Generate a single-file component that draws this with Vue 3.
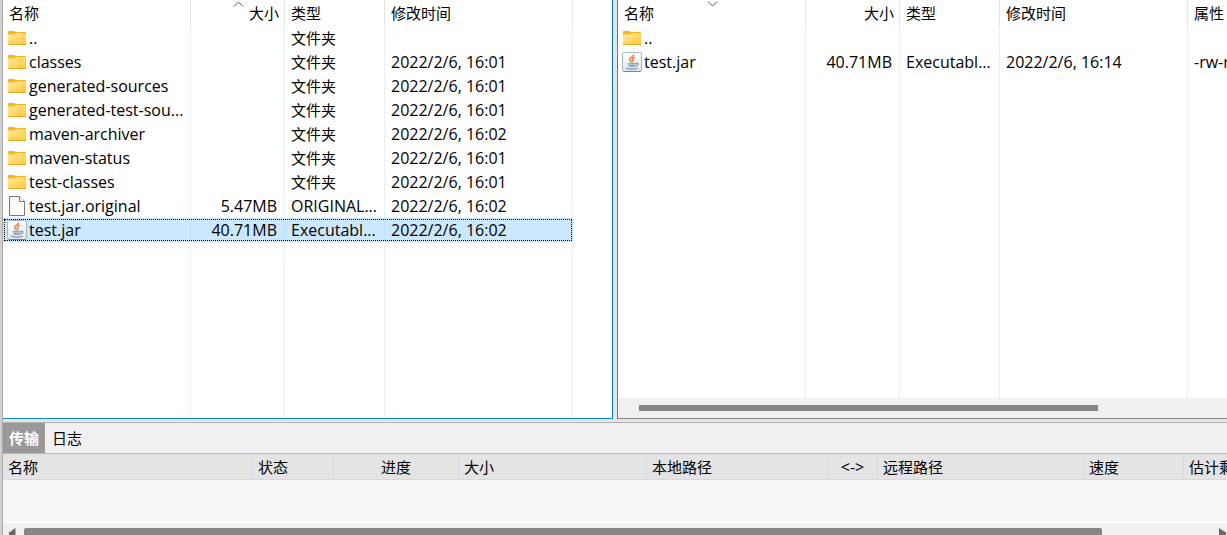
<script setup>
const folder = (name, time = '') => ({ icon: 'folder', name, size: '', type: '文件夹', time })

const localFiles = [
  folder('..'),
  folder('classes', '2022/2/6, 16:01'),
  folder('generated-sources', '2022/2/6, 16:01'),
  folder('generated-test-sou...', '2022/2/6, 16:01'),
  folder('maven-archiver', '2022/2/6, 16:02'),
  folder('maven-status', '2022/2/6, 16:01'),
  folder('test-classes', '2022/2/6, 16:01'),
  { icon: 'file', name: 'test.jar.original', size: '5.47MB', type: 'ORIGINAL...', time: '2022/2/6, 16:02' },
  { icon: 'jar', name: 'test.jar', size: '40.71MB', type: 'Executabl...', time: '2022/2/6, 16:02', selected: true },
]

const remoteFiles = [
  { icon: 'folder', name: '..', size: '', type: '', time: '', attr: '' },
  { icon: 'jar', name: 'test.jar', size: '40.71MB', type: 'Executabl...', time: '2022/2/6, 16:14', attr: '-rw-r--r--' },
]

const panes = [
  { id: 'local', files: localFiles, sort: 'size' },
  { id: 'remote', files: remoteFiles, sort: 'name' },
]

const transferColumns = [
  { key: 'name', label: '名称' },
  { key: 'state', label: '状态' },
  { key: 'progress', label: '进度' },
  { key: 'bytes', label: '大小' },
  { key: 'local-path', label: '本地路径' },
  { key: 'direction', label: '<->' },
  { key: 'remote-path', label: '远程路径' },
  { key: 'speed', label: '速度' },
  { key: 'remaining', label: '估计剩余' },
]
</script>

<template>
  <div class="window">
    <svg class="defs" width="0" height="0" aria-hidden="true">
      <defs>
        <linearGradient id="folder-fill" x1="0" y1="0" x2="1" y2="1">
          <stop offset="0" stop-color="#ffe9a2" />
          <stop offset="1" stop-color="#ffc937" />
        </linearGradient>
        <linearGradient id="jar-fill" x1="0" y1="0" x2="0" y2="1">
          <stop offset="0" stop-color="#ffffff" />
          <stop offset="1" stop-color="#dfe5ea" />
        </linearGradient>
      </defs>
    </svg>

    <main class="panes">
      <section v-for="pane in panes" :key="pane.id" class="pane" :class="pane.id">
        <div class="listing">
          <table class="files">
            <colgroup>
              <col class="c-name" /><col class="c-size" /><col class="c-type" /><col class="c-time" />
              <col v-if="pane.id === 'remote'" class="c-attr" />
            </colgroup>
            <thead>
              <tr>
                <th>
                  名称
                  <svg v-if="pane.sort === 'name'" class="sort" viewBox="0 0 11 6"><path d="M1 .5 5.500 5 10 .5" /></svg>
                </th>
                <th class="size">
                  大小
                  <svg v-if="pane.sort === 'size'" class="sort" viewBox="0 0 11 6"><path d="M1 5.500 5.500 1 10 5.500" /></svg>
                </th>
                <th>类型</th>
                <th>修改时间</th>
                <th v-if="pane.id === 'remote'">属性</th>
              </tr>
            </thead>
            <tbody>
              <tr v-for="file in pane.files" :key="file.name" :class="{ selected: file.selected }">
                <td class="name">
                  <div class="entry">
                    <svg v-if="file.icon === 'folder'" class="icon" viewBox="0 0 20 20">
                      <path d="M1 3.500Q1 3 1.500 3H7.500L8.500 4H18.500Q19 4 19 4.500V6H1Z" fill="#f8b61c" />
                      <path d="M1 7H7.500L9 5H19V16H1Z" fill="url(#folder-fill)" />
                      <path d="M1 16H19V17H1Z" fill="#e9a821" />
                      <path d="M1 5H8.500L7.500 6.800H1Z" fill="#fbb915" />
                    </svg>
                    <svg v-else-if="file.icon === 'file'" class="icon" viewBox="0 0 20 20">
                      <path d="M2.500 .5H12.500L17.500 5.500V19.500H2.500Z" fill="#fafafa" stroke="#777" />
                      <path d="M12.500 .5V5.500H17.500" fill="#fff" stroke="#777" />
                    </svg>
                    <svg v-else class="icon" viewBox="0 0 20 20">
                      <rect x=".5" y=".5" width="19" height="19" rx="2" fill="url(#jar-fill)" stroke="#a3b6c4" />
                      <path d="M1.500 19.500H18.500" stroke="#6f8494" />
                      <path d="M11.500 2.500C12.500 4.500 7.200 5.300 7.700 7.700 8 9 9.300 9.300 9.500 10.300M13 5.200C10.500 6 10 7 10.700 8 11.300 9 10.800 9.700 10.200 10.300" fill="none" stroke="#ee8645" stroke-width="1.600" />
                      <path d="M5.500 10.900H13.800L12.800 15H7Z" fill="#8fa7ba" />
                      <path d="M6.500 12.700H13" stroke="#c7d3dc" stroke-width=".8" />
                      <path d="M13.800 11.200C17 10.500 16.500 13.500 13.400 13.800M4 16C6.500 17.500 13 17.500 15.500 16" fill="none" stroke="#7d99ae" stroke-width="1.200" />
                    </svg>
                    <span>{{ file.name }}</span>
                  </div>
                </td>
                <td class="size">{{ file.size }}</td>
                <td :class="{ kind: file.icon === 'folder' }">{{ file.type }}</td>
                <td>{{ file.time }}</td>
                <td v-if="pane.id === 'remote'">{{ file.attr }}</td>
              </tr>
            </tbody>
          </table>
        </div>
        <div v-if="pane.id === 'remote'" class="pane-scroll"><div class="pane-thumb"></div></div>
      </section>
    </main>

    <section class="queue">
      <nav class="tabs">
        <button type="button" class="tab active">传输</button>
        <button type="button" class="tab">日志</button>
      </nav>
      <div class="queue-head">
        <table class="transfers">
          <colgroup>
            <col v-for="column in transferColumns" :key="column.key" :class="'q-' + column.key" />
          </colgroup>
          <thead>
            <tr>
              <th v-for="column in transferColumns" :key="column.key" :class="'h-' + column.key">{{ column.label }}</th>
            </tr>
          </thead>
        </table>
      </div>
      <div class="queue-body"></div>
      <div class="queue-scroll">
        <svg class="arrow" viewBox="0 0 8 10"><path d="M7.500 0V10L1 6.500Q.5 5 1 4.500Z" /></svg>
        <div class="queue-track"><div class="queue-thumb"></div></div>
        <svg class="arrow" viewBox="0 0 8 10"><path d="M0 0V10L7 6.500Q7.500 5 7 4.500Z" /></svg>
      </div>
    </section>
  </div>
</template>

<style>
body {
  margin: 0;
}
</style>

<style scoped>
.window {
  box-sizing: border-box;
  height: 100vh;
  display: flex;
  flex-direction: column;
  overflow: hidden;
  padding-left: 2px;
  background: linear-gradient(90deg, #d0d0d0 2px, #e5e5e5 2px);
  color: #000;
  font-family: "Open Sans", "Noto Sans CJK SC", sans-serif;
  font-size: 15px;
  line-height: 24px;
}
.defs {
  position: absolute;
}
.panes {
  flex: 1;
  min-height: 0;
  display: flex;
  gap: 4px;
  border-left: 1px solid #a8a8a8;
  padding-bottom: 3px;
}
.pane {
  box-sizing: border-box;
  flex: 1;
  min-width: 0;
  display: flex;
  flex-direction: column;
  background: #fff;
}
.local {
  border-right: 1px solid #0078c8;
  border-bottom: 1px solid #0a86d4;
}
.remote {
  border-left: 1px solid #787878;
  border-bottom: 1px solid #888;
}
/* Column rules run the full height of the list, below the last row too. */
.listing {
  flex: 1;
  overflow: hidden;
  background-image:
    linear-gradient(#e8f1fb, #e8f1fb),
    linear-gradient(#e8f1fb, #e8f1fb),
    linear-gradient(#e8f1fb, #e8f1fb),
    linear-gradient(#e8f1fb, #e8f1fb);
  background-size: 1px 100%;
  background-position: 187px 0, 281px 0, 381px 0, 569px 0;
  background-repeat: no-repeat;
}
table {
  table-layout: fixed;
  border-spacing: 0;
}
.files {
  width: 570px;
}
.remote .files {
  width: 670px;
}
.c-name,
.c-time {
  width: 188px;
}
.c-size {
  width: 94px;
}
.c-type,
.c-attr {
  width: 100px;
}
th,
td {
  box-sizing: border-box;
  padding: 0 0 0 6px;
  text-align: left;
  font-weight: 400;
  white-space: nowrap;
  overflow: hidden;
}
.files th {
  position: relative;
  height: 26px;
  border-right: 1px solid #e2e2e2;
}
.files td {
  height: 24px;
  font-size: 16px;
}
.files td.kind {
  font-size: 15px;
}
.files th.size {
  padding-right: 5px;
  text-align: right;
}
.files td.size {
  padding-right: 8px;
  text-align: right;
}
.files td.name {
  padding-left: 4px;
}
.sort {
  position: absolute;
  top: 1px;
  left: calc(50% - 5px);
  width: 11px;
  height: 6px;
  fill: none;
  stroke: #555;
}
.entry {
  display: flex;
  align-items: center;
  gap: 2px;
}
.icon {
  flex: none;
  width: 20px;
  height: 20px;
}
.selected {
  outline: 1px dotted #000;
  outline-offset: -2px;
}
.selected td {
  background: #cce8ff;
  border-right: 1px solid #bfe1ff;
}
.files .selected td.size {
  padding-right: 7px;
}
.pane-scroll {
  height: 20px;
  box-sizing: border-box;
  padding: 7px 21px;
  background: #f0f0f0;
}
.pane-thumb {
  width: 81%;
  height: 6px;
  background: #868686;
}
.queue {
  flex: none;
  border-left: 1px solid #a8a8a8;
  border-top: 1px solid #b4b4b4;
}
.tabs {
  display: flex;
  height: 30px;
  background: #f0f0f0;
  border-bottom: 1px solid #b8b8b8;
}
.tab {
  border: 0;
  padding: 0 7px;
  background: transparent;
  color: #000;
  font: inherit;
}
.tab.active {
  padding: 0 6px;
  background: #999;
  color: #fff;
  font-weight: 700;
}
.queue-head {
  overflow: hidden;
  background: #e4e4e4;
  border-bottom: 1px solid #d0dae6;
}
.transfers {
  width: 1281px;
}
.transfers th {
  height: 25px;
  padding-left: 5px;
  border-right: 1px solid #d0dae6;
}
.transfers th.h-progress,
.transfers th.h-direction {
  padding-left: 0;
  text-align: center;
}
.transfers th.h-direction {
  font-size: 16px;
}
.q-name { width: 250px; }
.q-state { width: 81px; }
.q-progress { width: 125px; }
.q-bytes { width: 188px; }
.q-local-path { width: 181px; }
.q-direction { width: 50px; }
.q-remote-path { width: 206px; }
.q-speed,
.q-remaining { width: 100px; }
.queue-body {
  height: 42px;
  background: #f7f7f7;
  border-bottom: 1px solid #fff;
}
.queue-scroll {
  box-sizing: border-box;
  display: flex;
  height: 12px;
  padding: 5px 0 0 5px;
  overflow: hidden;
  background: #f0f0f0;
}
.arrow {
  flex: none;
  width: 8px;
  height: 10px;
  fill: #6a6a6a;
}
.queue-track {
  flex: 1;
  padding: 0 10px 0 8px;
}
.queue-thumb {
  width: 91%;
  height: 9px;
  border-radius: 2px;
  background: #868686;
}
</style>
